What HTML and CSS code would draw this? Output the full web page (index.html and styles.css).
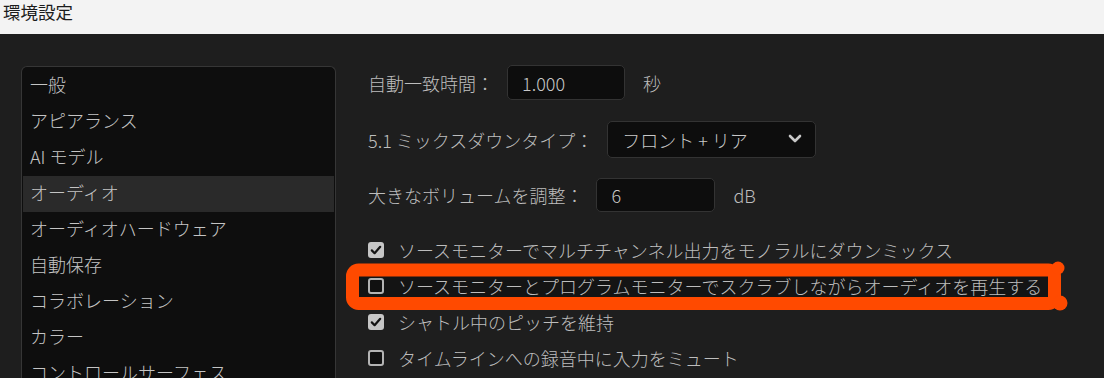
FILE: index.html
```html
<!DOCTYPE html>
<html lang="ja">
<head>
    <meta charset="UTF-8">
    <meta name="viewport" content="width=device-width, initial-scale=1.0">
    <title>環境設定</title>

    <link rel="stylesheet" href="styles.css">
</head>
<body>

    <div id="titlebar">環境設定</div>

    <div id="main">
        <div id="sidebar">
            <div class="item">一般</div>
            <div class="item">アピアランス</div>
            <div class="item">AI モデル</div>
            <div class="item selected">オーディオ</div>
            <div class="item">オーディオハードウェア</div>
            <div class="item">自動保存</div>
            <div class="item">コラボレーション</div>
            <div class="item">カラー</div>
            <div class="item">コントロールサーフェス</div>
        </div>

        <div id="content">
            <div class="field field-time">
                <span class="label">自動一致時間：</span>
                <div class="box box-time">1.000</div>
                <span class="unit">秒</span>
            </div>

            <div class="field field-mix">
                <span class="label">5.1 ミックスダウンタイプ：</span>
                <div class="box select">
                    <span>フロント + リア</span>
                    <svg class="chevron" width="14" height="10" viewBox="0 0 14 10">
                        <polyline points="2,2 7,7 12,2" fill="none" stroke="#c8c8c8" stroke-width="2.6" stroke-linecap="round" stroke-linejoin="round"/>
                    </svg>
                </div>
            </div>

            <div class="field field-vol">
                <span class="label">大きなボリュームを調整：</span>
                <div class="box box-vol">6</div>
                <span class="unit">dB</span>
            </div>

            <div class="checks">
                <div class="check">
                    <span class="tick on">
                        <svg width="16" height="16" viewBox="0 0 16 16">
                            <polyline points="3.8,8.4 6.6,11.2 12.2,4.8" fill="none" stroke="#141414" stroke-width="2.2" stroke-linecap="round" stroke-linejoin="round"/>
                        </svg>
                    </span>
                    <span>ソースモニターでマルチチャンネル出力をモノラルにダウンミックス</span>
                </div>
                <div class="check marked">
                    <span class="tick"></span>
                    <span>ソースモニターとプログラムモニターでスクラブしながらオーディオを再生する</span>
                </div>
                <div class="check">
                    <span class="tick on">
                        <svg width="16" height="16" viewBox="0 0 16 16">
                            <polyline points="3.8,8.4 6.6,11.2 12.2,4.8" fill="none" stroke="#141414" stroke-width="2.2" stroke-linecap="round" stroke-linejoin="round"/>
                        </svg>
                    </span>
                    <span>シャトル中のピッチを維持</span>
                </div>
                <div class="check">
                    <span class="tick"></span>
                    <span>タイムラインへの録音中に入力をミュート</span>
                </div>
            </div>
        </div>
    </div>

    <!-- hand drawn marker around the scrub option -->
    <svg id="marker" width="1104" height="378" viewBox="0 0 1104 378">
        <rect x="352.5" y="270" width="702" height="33.5" rx="6" fill="#141414" stroke="#ff4a00" stroke-width="13"/>
        <circle cx="1058" cy="268" r="6.5" fill="#ff4a00"/>
        <circle cx="1060" cy="303" r="7.5" fill="#ff4a00"/>
    </svg>

</body>
</html>
```

FILE: styles.css
```css
body {
    font-family: 'Noto Sans CJK JP', 'Noto Sans', sans-serif;
    font-weight: 300;
    margin: 0;
    background-color: #1e1e1e;
    color: #c0c0c0;
    height: 378px;
    overflow: hidden;
    position: relative;
}

#titlebar {
    height: 34px;
    line-height: 24px;
    padding-left: 3px;
    font-size: 17.5px;
    font-weight: 400;
    color: #1c1c1c;
    background-color: #f3f3f3;
}

#main {
    display: flex;
    align-items: flex-start;
    padding-left: 21px;
}

#sidebar {
    width: 311px;
    height: 311px;
    margin-top: 32px;
    padding: 1px;
    overflow: hidden;
    border: 1px solid #363636;
    border-bottom: none;
    border-radius: 6px 6px 0 0;
    background-color: #0e0e0e;
}

.item {
    height: 36px;
    line-height: 33px;
    padding-left: 7px;
    font-size: 18px;
    color: #c4c4c4;
    white-space: nowrap;
}

.item.selected {
    background-color: #2a2a2a;
}

#content {
    margin-left: 32px;
    padding-top: 31px;
    font-size: 18px;
}

.field {
    display: flex;
    align-items: center;
    white-space: nowrap;
}

.field-time {
    height: 35px;
    margin-bottom: 21px;
}

.field-mix {
    height: 37px;
    margin-bottom: 20px;
}

.field-vol {
    height: 34px;
}

.label {
    color: #bdbdbd;
}

.box {
    box-sizing: border-box;
    height: 100%;
    display: flex;
    align-items: center;
    padding-left: 14px;
    border: 1px solid #333;
    border-radius: 5px;
    background-color: #0d0d0d;
    color: #c8c8c8;
}

.box-time {
    width: 118px;
    margin-left: 13px;
}

.box-vol {
    width: 119px;
    margin-left: 13px;
}

.select {
    width: 209px;
    margin-left: 14px;
    justify-content: space-between;
    padding-right: 13px;
}

.chevron {
    margin-top: -2px;
}

.unit {
    margin-left: 18px;
    color: #bdbdbd;
}

.checks {
    margin-top: 20px;
}

.check {
    height: 36px;
    display: flex;
    align-items: center;
    white-space: nowrap;
    color: #bdbdbd;
}

.tick {
    box-sizing: border-box;
    width: 16px;
    height: 16px;
    margin-right: 14px;
    border: 2px solid #b4b4b4;
    border-radius: 3px;
    background-color: #111;
    flex-shrink: 0;
}

.tick.on {
    border: none;
    background-color: #c6c6c6;
}

.tick svg {
    display: block;
}

#marker {
    position: absolute;
    left: 0;
    top: 0;
    z-index: -1;
    pointer-events: none;
}
```
